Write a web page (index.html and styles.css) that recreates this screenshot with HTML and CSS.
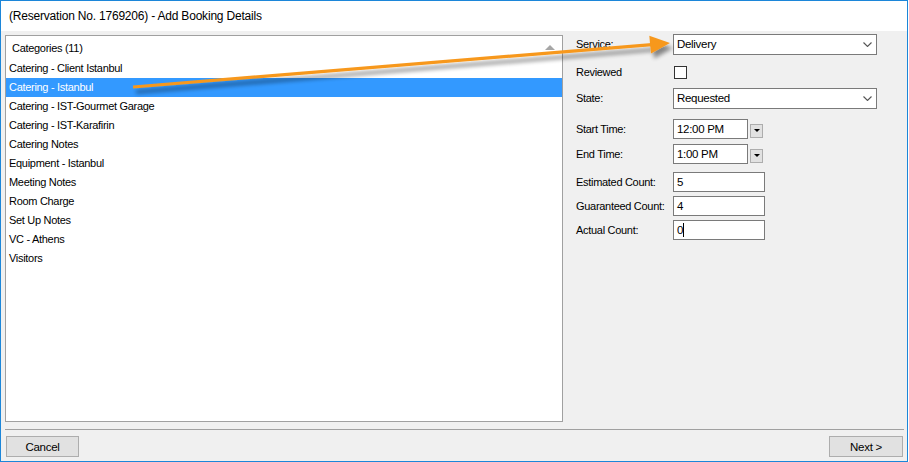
FILE: index.html
```html
<!DOCTYPE html>
<html>
<head>
<meta charset="utf-8">
<link rel="stylesheet" href="styles.css">
</head>
<body>
<div class="window">
  <div class="titlebar">(Reservation No. 1769206) - Add Booking Details</div>
  <div class="content">
    <div class="main">
      <div class="listbox">
        <div class="list-header">
          <span>Categories (11)</span>
          <span class="scroll-up"></span>
        </div>
        <div class="item">Catering - Client Istanbul</div>
        <div class="item selected">Catering - Istanbul</div>
        <div class="item">Catering - IST-Gourmet Garage</div>
        <div class="item">Catering - IST-Karafirin</div>
        <div class="item">Catering Notes</div>
        <div class="item">Equipment - Istanbul</div>
        <div class="item">Meeting Notes</div>
        <div class="item">Room Charge</div>
        <div class="item">Set Up Notes</div>
        <div class="item">VC - Athens</div>
        <div class="item">Visitors</div>
      </div>
      <div class="form">
        <div class="row r1">
          <span class="label">Service:</span>
          <div class="combo"><span>Delivery</span><svg class="chev" width="9" height="5" viewBox="0 0 9 5"><polyline points="0.5,0.5 4.5,4.5 8.5,0.5" fill="none" stroke="#555" stroke-width="1.1"/></svg></div>
        </div>
        <div class="row r2">
          <span class="label">Reviewed</span>
          <span class="checkbox"></span>
        </div>
        <div class="row r3">
          <span class="label">State:</span>
          <div class="combo"><span>Requested</span><svg class="chev" width="9" height="5" viewBox="0 0 9 5"><polyline points="0.5,0.5 4.5,4.5 8.5,0.5" fill="none" stroke="#555" stroke-width="1.1"/></svg></div>
        </div>
        <div class="row r4">
          <span class="label">Start Time:</span>
          <div class="timebox">12:00 PM</div>
          <span class="spin"><span class="tri"></span></span>
        </div>
        <div class="row r5">
          <span class="label">End Time:</span>
          <div class="timebox">1:00 PM</div>
          <span class="spin"><span class="tri"></span></span>
        </div>
        <div class="row r6">
          <span class="label">Estimated Count:</span>
          <div class="textbox">5</div>
        </div>
        <div class="row r7">
          <span class="label">Guaranteed Count:</span>
          <div class="textbox">4</div>
        </div>
        <div class="row r8">
          <span class="label">Actual Count:</span>
          <div class="textbox"><span class="caret">0</span></div>
        </div>
      </div>
    </div>
    <div class="separator"></div>
    <div class="footer">
      <div class="button cancel">Cancel</div>
      <div class="button next">Next &gt;</div>
    </div>
  </div>
</div>
<svg class="annotation" width="909" height="462" viewBox="0 0 909 462">
  <defs>
    <filter id="sh" x="-10%" y="-50%" width="120%" height="200%">
      <feGaussianBlur in="SourceAlpha" stdDeviation="2"/>
      <feOffset dx="3" dy="5" result="b"/>
      <feComponentTransfer><feFuncA type="linear" slope="0.45"/></feComponentTransfer>
      <feMerge><feMergeNode/><feMergeNode in="SourceGraphic"/></feMerge>
    </filter>
  </defs>
  <g filter="url(#sh)">
    <line x1="133" y1="87" x2="655" y2="44.3" stroke="#f7981d" stroke-width="3.2"/>
    <polygon points="670,43 649.3,35.8 651,53.4" fill="#f7981d"/>
  </g>
</svg>
</body>
</html>
```
FILE: styles.css
```css
html, body {
  margin: 0;
  padding: 0;
  background: #ffffff;
}
body {
  font-family: "Liberation Sans", Arial, sans-serif;
  font-size: 11px;
  letter-spacing: -0.3px;
  color: #000;
  position: relative;
  width: 909px;
  height: 462px;
  overflow: hidden;
}
.window {
  width: 906px;
  height: 460px;
  border: 1px solid #1c86d9;
  display: flex;
  flex-direction: column;
  background: #f0f0f0;
}
.titlebar {
  height: 30px;
  flex: none;
  background: #ffffff;
  font-size: 12px;
  letter-spacing: -0.2px;
  line-height: 30px;
  padding-left: 8px;
}
.content {
  flex: 1;
  display: flex;
  flex-direction: column;
  padding: 4px 0 0 0;
}
.main {
  display: flex;
  height: 387px;
  flex: none;
  margin-left: 4px;
}
.listbox {
  width: 556px;
  height: 385px;
  border: 1px solid #a0a0a0;
  background: #ffffff;
  display: flex;
  flex-direction: column;
}
.list-header {
  height: 23px;
  flex: none;
  display: flex;
  align-items: center;
  justify-content: space-between;
  padding: 0 7px 0 6px;
}
.scroll-up {
  width: 0;
  height: 0;
  border-left: 5px solid transparent;
  border-right: 5px solid transparent;
  border-bottom: 5px solid #a6a6a6;
  margin-top: -1px;
}
.item {
  height: 19px;
  line-height: 19px;
  padding-left: 3px;
  white-space: nowrap;
}
.item.selected {
  background: #3399ff;
  color: #ffffff;
}
.form {
  display: flex;
  flex-direction: column;
  margin-left: 13px;
}
.row {
  display: flex;
  align-items: center;
  height: 20px;
  flex: none;
}
.r1 { margin-top: -1px; }
.r2 { margin-top: 8px; }
.r3 { margin-top: 6px; }
.r4 { margin-top: 11px; }
.r5 { margin-top: 5px; }
.r6 { margin-top: 8px; }
.r7 { margin-top: 4px; }
.r8 { margin-top: 4px; }
.label {
  width: 97px;
  flex: none;
  white-space: nowrap;
}
.combo {
  width: 202px;
  height: 19px;
  border: 1px solid #7a7a7a;
  background: #ffffff;
  display: flex;
  align-items: center;
  justify-content: space-between;
  padding: 0 4px 0 3px;
  box-sizing: border-box;
  width: 204px;
  height: 21px;
  font-size: 11.5px;
}
.chev {
  display: block;
  margin-top: 1px;
}
.checkbox {
  width: 11px;
  height: 11px;
  border: 1px solid #333333;
  background: #ffffff;
  margin-left: 1px;
}
.timebox, .textbox {
  box-sizing: border-box;
  height: 20px;
  border: 1px solid #7a7a7a;
  background: #ffffff;
  padding-left: 3px;
  display: flex;
  align-items: center;
  font-size: 11.5px;
}
.timebox {
  width: 75px;
}
.textbox {
  width: 92px;
}
.spin {
  box-sizing: border-box;
  width: 13px;
  height: 14px;
  margin-left: 2px;
  margin-top: 3px;
  border: 1px solid #adadad;
  background: #e1e1e1;
  display: flex;
  align-items: center;
  justify-content: center;
}
.tri {
  width: 0;
  height: 0;
  border-left: 3px solid transparent;
  border-right: 3px solid transparent;
  border-top: 3px solid #000;
}
.caret {
  border-right: 1px solid #000;
  padding-right: 0;
  line-height: 14px;
}
.separator {
  height: 0;
  border-top: 1px solid #a0a0a0;
  margin: 7px 3px 0 4px;
}
.footer {
  display: flex;
  justify-content: space-between;
  margin: 6px 4px 0 5px;
}
.button {
  box-sizing: border-box;
  height: 21px;
  border: 1px solid #adadad;
  background: #e1e1e1;
  display: flex;
  align-items: center;
  justify-content: center;
  font-size: 11.5px;
}
.cancel { width: 73px; }
.next { width: 74px; }
.annotation {
  position: absolute;
  left: 0;
  top: 0;
  pointer-events: none;
}
```
